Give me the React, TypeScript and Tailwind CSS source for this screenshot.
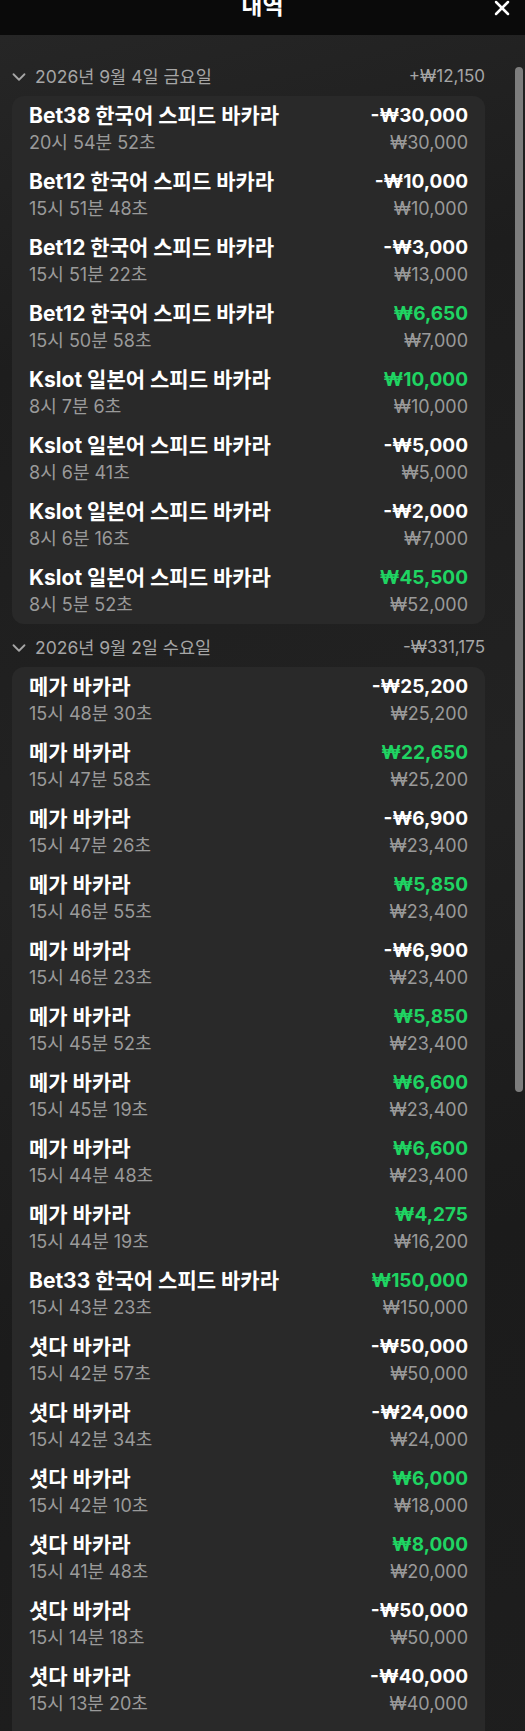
import { ChevronDown, X } from 'lucide-react';

type Entry = {
  game: string;
  time: string;
  amount: string;
  win: boolean;
  stake: string;
};

type Group = {
  date: string;
  total: string;
  entries: Entry[];
};

const groups: Group[] = [
  {
    date: '2026년 9월 4일 금요일',
    total: '+₩12,150',
    entries: [
      { game: 'Bet38 한국어 스피드 바카라', time: '20시 54분 52초', amount: '-₩30,000', win: false, stake: '₩30,000' },
      { game: 'Bet12 한국어 스피드 바카라', time: '15시 51분 48초', amount: '-₩10,000', win: false, stake: '₩10,000' },
      { game: 'Bet12 한국어 스피드 바카라', time: '15시 51분 22초', amount: '-₩3,000', win: false, stake: '₩13,000' },
      { game: 'Bet12 한국어 스피드 바카라', time: '15시 50분 58초', amount: '₩6,650', win: true, stake: '₩7,000' },
      { game: 'Kslot 일본어 스피드 바카라', time: '8시 7분 6초', amount: '₩10,000', win: true, stake: '₩10,000' },
      { game: 'Kslot 일본어 스피드 바카라', time: '8시 6분 41초', amount: '-₩5,000', win: false, stake: '₩5,000' },
      { game: 'Kslot 일본어 스피드 바카라', time: '8시 6분 16초', amount: '-₩2,000', win: false, stake: '₩7,000' },
      { game: 'Kslot 일본어 스피드 바카라', time: '8시 5분 52초', amount: '₩45,500', win: true, stake: '₩52,000' },
    ],
  },
  {
    date: '2026년 9월 2일 수요일',
    total: '-₩331,175',
    entries: [
      { game: '메가 바카라', time: '15시 48분 30초', amount: '-₩25,200', win: false, stake: '₩25,200' },
      { game: '메가 바카라', time: '15시 47분 58초', amount: '₩22,650', win: true, stake: '₩25,200' },
      { game: '메가 바카라', time: '15시 47분 26초', amount: '-₩6,900', win: false, stake: '₩23,400' },
      { game: '메가 바카라', time: '15시 46분 55초', amount: '₩5,850', win: true, stake: '₩23,400' },
      { game: '메가 바카라', time: '15시 46분 23초', amount: '-₩6,900', win: false, stake: '₩23,400' },
      { game: '메가 바카라', time: '15시 45분 52초', amount: '₩5,850', win: true, stake: '₩23,400' },
      { game: '메가 바카라', time: '15시 45분 19초', amount: '₩6,600', win: true, stake: '₩23,400' },
      { game: '메가 바카라', time: '15시 44분 48초', amount: '₩6,600', win: true, stake: '₩23,400' },
      { game: '메가 바카라', time: '15시 44분 19초', amount: '₩4,275', win: true, stake: '₩16,200' },
      { game: 'Bet33 한국어 스피드 바카라', time: '15시 43분 23초', amount: '₩150,000', win: true, stake: '₩150,000' },
      { game: '셧다 바카라', time: '15시 42분 57초', amount: '-₩50,000', win: false, stake: '₩50,000' },
      { game: '셧다 바카라', time: '15시 42분 34초', amount: '-₩24,000', win: false, stake: '₩24,000' },
      { game: '셧다 바카라', time: '15시 42분 10초', amount: '₩6,000', win: true, stake: '₩18,000' },
      { game: '셧다 바카라', time: '15시 41분 48초', amount: '₩8,000', win: true, stake: '₩20,000' },
      { game: '셧다 바카라', time: '15시 14분 18초', amount: '-₩50,000', win: false, stake: '₩50,000' },
      { game: '셧다 바카라', time: '15시 13분 20초', amount: '-₩40,000', win: false, stake: '₩40,000' },
      { game: '셧다 바카라', time: '15시 12분 47초', amount: '-₩30,000', win: false, stake: '₩30,000' },
    ],
  },
];

function Row({ entry }: { entry: Entry }) {
  return (
    <div className="h-[66px] pt-[7px] px-[17px]">
      <div className="flex items-center justify-between h-[26px] font-bold">
        <span className="text-white text-[21px]">{entry.game}</span>
        <span className={`text-[19px] ${entry.win ? 'text-[#1fd462]' : 'text-white'}`}>{entry.amount}</span>
      </div>
      <div className="flex items-center justify-between h-[22px] mt-[2px] text-[18px] text-[#9a9a9a]">
        <span>{entry.time}</span>
        <span>{entry.stake}</span>
      </div>
    </div>
  );
}

function DateGroup({ group, first }: { group: Group; first: boolean }) {
  return (
    <div>
      <div className={`flex items-center justify-between h-[22px] mb-[8px] -ml-[4px] ${first ? '' : 'mt-[13px]'}`}>
        <div className="flex items-center gap-[5px] text-[17.5px] text-[#a6a6a6]">
          <ChevronDown size={22} strokeWidth={2} className="text-[#a6a6a6]" />
          <span>{group.date}</span>
        </div>
        <span className="text-[17px] text-[#a6a6a6]">{group.total}</span>
      </div>
      <div className="rounded-[12px] bg-[#292929]">
        {group.entries.map((e, i) => (
          <Row key={i} entry={e} />
        ))}
      </div>
    </div>
  );
}

export default function App() {
  return (
    <div
      className="w-[525px] h-[1731px] overflow-hidden flex flex-col bg-[#1c1c1c]"
      style={{ fontFamily: '"Inter", "Noto Sans CJK KR", sans-serif' }}
    >
      <header className="h-[35px] shrink-0 bg-[#0a0a0a] grid grid-cols-[1fr_auto_1fr] items-start">
        <div />
        <h1 className="text-white text-[23px] font-bold leading-[24px] -mt-[6px]">내역</h1>
        <div className="flex justify-end pr-[11px] -mt-[4px]">
          <X size={24} strokeWidth={2.5} className="text-white" />
        </div>
      </header>

      <div className="flex-1 flex bg-[linear-gradient(165deg,#262626_0%,#1d1d1d_18%,#222222_45%,#1b1b1b_70%,#1e1e1e_100%)]">
        <div className="flex-1 pt-[31px] pl-[12px] pr-[27px]">
          {groups.map((g, i) => (
            <DateGroup key={i} group={g} first={i === 0} />
          ))}
        </div>
        <div className="w-[13px] shrink-0 flex flex-col pt-[32px] pb-[3px]">
          <div className="ml-[3px] w-[8px] h-[1025px] rounded-full bg-[#7d7d7d]" />
          <div className="flex-1" />
          <div className="flex justify-center">
            <div className="w-0 h-0 border-l-[4px] border-r-[4px] border-t-[6px] border-l-transparent border-r-transparent border-t-[#8a8a8a]" />
          </div>
        </div>
      </div>
    </div>
  );
}
